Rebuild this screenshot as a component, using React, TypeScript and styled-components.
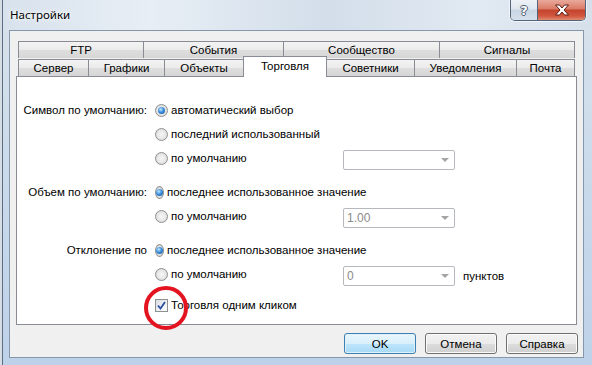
import React from "react";
import styled, { createGlobalStyle } from "styled-components";

const GlobalStyle = createGlobalStyle`
  html, body {
    margin: 0;
    padding: 0;
  }
  body {
    background: #d6dde5;
    font-family: "Liberation Sans", Arial, sans-serif;
    font-size: 11.5px;
    color: #000;
    overflow: hidden;
  }
`;

const Window = styled.div`
  position: relative;
  box-sizing: border-box;
  width: 590px;
  height: 365px;
  margin-left: 2px;
  border-left: 1px solid #5d6e82;
  display: flex;
  flex-direction: column;
  background: linear-gradient(180deg, #dde6ef 0px, #d5e0eb 40px, #c8d9eb 200px, #bdd1e8 365px);
`;

const TitleBar = styled.div`
  display: flex;
  align-items: flex-start;
  height: 30px;
  padding-left: 7px;
  background: linear-gradient(90deg, #d8e2ed 0%, #e7eef5 25%, #d3deea 55%, #e1e9f2 80%, #d6e0eb 100%);
`;

const Caption = styled.div`
  font-family: "Noto Sans", "Open Sans", sans-serif;
  font-size: 11.5px;
  line-height: 16px;
  padding-top: 7px;
  color: #000;
  text-shadow: 0 0 6px #ffffff, 0 0 3px #ffffff;
`;

const CaptionButtons = styled.div`
  margin-left: auto;
  margin-right: 6px;
  display: flex;
  height: 20px;
  border: 1px solid #53657b;
  border-top: none;
  border-radius: 0 0 5px 5px;
  overflow: hidden;
  box-shadow: 0 0 0 1px rgba(255, 255, 255, 0.6);
`;

const HelpButton = styled.div`
  width: 26px;
  display: flex;
  align-items: center;
  justify-content: center;
  border-right: 1px solid #53657b;
  background: linear-gradient(180deg, #eef2f7 0%, #dfe6ef 45%, #c9d5e3 50%, #d6e0ec 100%);
  font-family: "DejaVu Sans", sans-serif;
  font-weight: bold;
  font-size: 13px;
  color: #ffffff;
  text-shadow: -1px 0 #4d5c6e, 1px 0 #4d5c6e, 0 -1px #4d5c6e, 0 1px #4d5c6e;
`;

const CloseButton = styled.div`
  width: 47px;
  display: flex;
  align-items: center;
  justify-content: center;
  background: linear-gradient(180deg, #e9a99b 0%, #d97a66 45%, #c4432b 50%, #d0583f 80%, #e08a6f 100%);
`;

const Client = styled.div`
  flex: 1;
  display: flex;
  flex-direction: column;
  margin: 0 8px 7px 6px;
  padding: 10px 6px 0 6px;
  background: #f0f0f0;
  border: 1px solid #8797ab;
`;

const TabStrip = styled.div`
  display: flex;
  flex-direction: column;
  padding: 0 2px;
`;

const TabRow = styled.div<{ $height: number }>`
  display: flex;
  align-items: flex-end;
  height: ${(p) => p.$height}px;
`;

const Tab = styled.div<{ $width: number; $active?: boolean }>`
  position: relative;
  box-sizing: border-box;
  width: ${(p) => p.$width}px;
  height: ${(p) => (p.$active ? 21 : 17)}px;
  margin-bottom: ${(p) => (p.$active ? -1 : 0)}px;
  z-index: ${(p) => (p.$active ? 2 : 0)};
  display: flex;
  align-items: ${(p) => (p.$active ? "flex-start" : "center")};
  padding-top: ${(p) => (p.$active ? 3 : 0)}px;
  justify-content: center;
  border: 1px solid #898c95;
  border-bottom: none;
  border-left: none;
  background: ${(p) =>
    p.$active
      ? "#ffffff"
      : "linear-gradient(180deg, #f3f3f3 0%, #ebebeb 50%, #dedede 51%, #d6d6d6 100%)"};
  &:first-child {
    border-left: 1px solid #898c95;
  }
  ${(p) => p.$active && "border-left: 1px solid #898c95; margin-left: -1px; width: " + (p.$width + 1) + "px;"}
`;

const Panel = styled.div`
  position: relative;
  z-index: 1;
  box-sizing: border-box;
  height: 249px;
  background: #ffffff;
  border: 1px solid #898c95;
  padding-top: 21px;
  display: flex;
  flex-direction: column;
`;

const Group = styled.div<{ $gap?: number }>`
  display: flex;
  flex-direction: column;
  margin-top: ${(p) => p.$gap ?? 0}px;
`;

const Row = styled.div`
  display: grid;
  grid-template-columns: 138px 188px 112px auto;
  align-items: center;
  height: 24px;
`;

const RowLabel = styled.div`
  text-align: right;
  padding-right: 8px;
  white-space: nowrap;
`;

const Option = styled.label`
  display: flex;
  align-items: center;
  gap: 3px;
  white-space: nowrap;
`;

const Radio = styled.span<{ $checked?: boolean }>`
  box-sizing: border-box;
  width: 13px;
  height: 13px;
  border-radius: 50%;
  border: 1px solid #8e8f8f;
  background: radial-gradient(circle at 50% 50%, #f7f7f7 0%, #e6e6e6 55%, #cbcbcb 100%);
  display: flex;
  align-items: center;
  justify-content: center;
  &::after {
    content: "";
    width: 7px;
    height: 7px;
    border-radius: 50%;
    display: ${(p) => (p.$checked ? "block" : "none")};
    background: radial-gradient(circle at 40% 35%, #c4eaff 0%, #3d8fdc 45%, #0c4b93 100%);
  }
`;

const CheckBox = styled.span`
  box-sizing: border-box;
  width: 13px;
  height: 13px;
  border: 1px solid #8e8f8f;
  background: linear-gradient(135deg, #d9dde3 0%, #f4f5f7 70%, #ffffff 100%);
  display: flex;
  align-items: center;
  justify-content: center;
`;

const Combo = styled.div`
  box-sizing: border-box;
  height: 20px;
  margin-top: 3px;
  border: 1px solid #b5b9bd;
  border-radius: 2px;
  background: #ffffff;
  display: flex;
  align-items: center;
  padding-left: 3px;
  color: #8a8a8a;
  font-size: 12px;
`;

const ComboArrow = styled.span`
  margin-left: auto;
  margin-right: 5px;
  width: 0;
  height: 0;
  border-left: 4px solid transparent;
  border-right: 4px solid transparent;
  border-top: 4px solid #a4a4a4;
`;

const Suffix = styled.div`
  padding-left: 8px;
  margin-top: 3px;
`;

const ButtonRow = styled.div`
  display: flex;
  justify-content: flex-end;
  gap: 9px;
  margin-top: 8px;
  margin-right: -1px;
`;

const Button = styled.div<{ $default?: boolean }>`
  box-sizing: border-box;
  width: 72px;
  height: 21px;
  display: flex;
  align-items: center;
  justify-content: center;
  border-radius: 3px;
  border: 1px solid ${(p) => (p.$default ? "#3c7fb1" : "#707070")};
  box-shadow: inset 0 0 0 1px ${(p) => (p.$default ? "#dff2fc" : "#fbfbfb")};
  background: ${(p) =>
    p.$default
      ? "linear-gradient(180deg, #eaf6fd 0%, #d9f0fc 50%, #bee6fd 51%, #a7d9f5 100%)"
      : "linear-gradient(180deg, #f2f2f2 0%, #ebebeb 50%, #dddddd 51%, #cfcfcf 100%)"};
`;

const Marker = styled.div`
  position: absolute;
  z-index: 10;
  left: 141px;
  top: 286px;
  width: 44px;
  height: 44px;
  box-sizing: border-box;
  border: 4px solid #e3141f;
  border-radius: 50%;
  pointer-events: none;
`;

const topTabs = [
  { label: "FTP", width: 126 },
  { label: "События", width: 140 },
  { label: "Сообщество", width: 156 },
  { label: "Сигналы", width: 135 },
];

const bottomTabs = [
  { label: "Сервер", width: 71 },
  { label: "Графики", width: 76 },
  { label: "Объекты", width: 79 },
  { label: "Торговля", width: 83, active: true },
  { label: "Советники", width: 88 },
  { label: "Уведомления", width: 102 },
  { label: "Почта", width: 58 },
];

function Select({ value }: { value?: string }) {
  return (
    <Combo>
      {value}
      <ComboArrow />
    </Combo>
  );
}

export default function App() {
  return (
    <>
      <GlobalStyle />
      <Window>
        <TitleBar>
          <Caption>Настройки</Caption>
          <CaptionButtons>
            <HelpButton>?</HelpButton>
            <CloseButton>
              <svg width="16" height="12" viewBox="0 0 16 12">
                <path
                  d="M1.5 1 H5.5 L8 4 L10.5 1 H14.5 L10 6 L14.5 11 H10.5 L8 8 L5.5 11 H1.5 L6 6 Z"
                  fill="#ffffff"
                  stroke="#5a1b12"
                  strokeWidth="1"
                  strokeLinejoin="round"
                />
              </svg>
            </CloseButton>
          </CaptionButtons>
        </TitleBar>
        <Client>
          <TabStrip>
            <TabRow $height={17}>
              {topTabs.map((t) => (
                <Tab key={t.label} $width={t.width}>
                  {t.label}
                </Tab>
              ))}
            </TabRow>
            <TabRow $height={18}>
              {bottomTabs.map((t) => (
                <Tab key={t.label} $width={t.width} $active={t.active}>
                  {t.label}
                </Tab>
              ))}
            </TabRow>
          </TabStrip>
          <Panel>
            <Group>
              <Row>
                <RowLabel>Символ по умолчанию:</RowLabel>
                <Option>
                  <Radio $checked />
                  автоматический выбор
                </Option>
              </Row>
              <Row>
                <span />
                <Option>
                  <Radio />
                  последний использованный
                </Option>
              </Row>
              <Row>
                <span />
                <Option>
                  <Radio />
                  по умолчанию
                </Option>
                <Select />
              </Row>
            </Group>
            <Group $gap={10}>
              <Row>
                <RowLabel>Объем по умолчанию:</RowLabel>
                <Option>
                  <Radio $checked />
                  последнее использованное значение
                </Option>
              </Row>
              <Row>
                <span />
                <Option>
                  <Radio />
                  по умолчанию
                </Option>
                <Select value="1.00" />
              </Row>
            </Group>
            <Group $gap={10}>
              <Row>
                <RowLabel>Отклонение по</RowLabel>
                <Option>
                  <Radio $checked />
                  последнее использованное значение
                </Option>
              </Row>
              <Row>
                <span />
                <Option>
                  <Radio />
                  по умолчанию
                </Option>
                <Select value="0" />
                <Suffix>пунктов</Suffix>
              </Row>
            </Group>
            <Group $gap={7}>
              <Row>
                <span />
                <Option>
                  <CheckBox>
                    <svg width="9" height="9" viewBox="0 0 9 9">
                      <path
                        d="M1 4.5 L3.5 7.5 L8 1"
                        fill="none"
                        stroke="#2d4fa3"
                        strokeWidth="1.8"
                      />
                    </svg>
                  </CheckBox>
                  Торговля одним кликом
                </Option>
              </Row>
            </Group>
          </Panel>
          <ButtonRow>
            <Button $default>OK</Button>
            <Button>Отмена</Button>
            <Button>Справка</Button>
          </ButtonRow>
        </Client>
        <Marker />
      </Window>
    </>
  );
}
